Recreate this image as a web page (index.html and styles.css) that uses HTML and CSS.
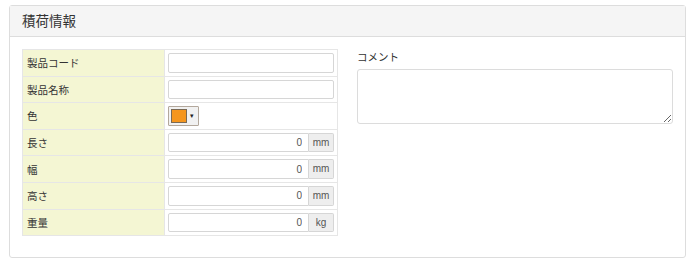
FILE: index.html
```html
<!DOCTYPE html>
<html lang="ja">
<head>
    <meta charset="UTF-8">
    <meta name="viewport" content="width=device-width, initial-scale=1.0">
    <title>積荷情報</title>
    <link rel="stylesheet" href="styles.css">
</head>
<body>
    <div class="panel">
        <div class="panel-heading">積荷情報</div>
        <div class="panel-body">
            <table class="spec-table">
                <tr>
                    <th>製品コード</th>
                    <td><input type="text" class="field"></td>
                </tr>
                <tr>
                    <th>製品名称</th>
                    <td><input type="text" class="field"></td>
                </tr>
                <tr>
                    <th>色</th>
                    <td>
                        <button type="button" class="color-btn">
                            <span class="swatch"></span>
                            <span class="caret">&#9662;</span>
                        </button>
                    </td>
                </tr>
                <tr>
                    <th>長さ</th>
                    <td>
                        <div class="input-group">
                            <input type="text" class="field num" value="0">
                            <span class="unit">mm</span>
                        </div>
                    </td>
                </tr>
                <tr>
                    <th>幅</th>
                    <td>
                        <div class="input-group">
                            <input type="text" class="field num" value="0">
                            <span class="unit">mm</span>
                        </div>
                    </td>
                </tr>
                <tr>
                    <th>高さ</th>
                    <td>
                        <div class="input-group">
                            <input type="text" class="field num" value="0">
                            <span class="unit">mm</span>
                        </div>
                    </td>
                </tr>
                <tr>
                    <th>重量</th>
                    <td>
                        <div class="input-group">
                            <input type="text" class="field num" value="0">
                            <span class="unit">kg</span>
                        </div>
                    </td>
                </tr>
            </table>

            <div class="comment">
                <label class="comment-label">コメント</label>
                <textarea class="comment-box"></textarea>
            </div>
        </div>
    </div>
</body>
</html>
```

FILE: styles.css
```css
:root {
    --border-color: #dddddd;
    --label-bg: #f4f6d3;
    --text-color: #333;
}

* {
    margin: 0;
    padding: 0;
    box-sizing: border-box;
}

body {
    font-family: 'Noto Sans CJK JP', 'Noto Sans', sans-serif;
    color: var(--text-color);
    background-color: #fff;
    padding: 5px 14px 0 9px;
}

.panel {
    border: 1px solid var(--border-color);
    border-radius: 3px;
    height: 253px;
}

.panel-heading {
    background-color: #f5f5f5;
    border-bottom: 1px solid var(--border-color);
    height: 31px;
    padding: 0 12px;
    font-size: 13.5px;
    line-height: 29px;
}

.panel-body {
    display: flex;
    gap: 19px;
    padding: 12px;
}

.spec-table {
    width: 317px;
    border-collapse: collapse;
    border: 1px solid #e6e6e6;
    font-size: 10.5px;
}

.spec-table th,
.spec-table td {
    border: 1px solid #e6e6e6;
    padding: 3px;
    height: 25.6px;
}

.spec-table th {
    width: 142px;
    background-color: var(--label-bg);
    font-weight: normal;
    text-align: left;
    padding-left: 4px;
}

.field {
    display: block;
    width: 100%;
    height: 19.6px;
    border: 1px solid #d6d6d6;
    border-radius: 2px;
    font-family: 'Liberation Sans', sans-serif;
    font-size: 10px;
    color: #555;
    padding: 0 6px;
    outline: none;
}

.field.num {
    text-align: right;
    border-radius: 2px 0 0 2px;
}

.input-group {
    display: flex;
}

.unit {
    flex: 0 0 25px;
    height: 19.6px;
    background-color: #eeeeee;
    border: 1px solid #d6d6d6;
    border-left: none;
    border-radius: 0 2px 2px 0;
    font-family: 'Liberation Sans', sans-serif;
    font-size: 10px;
    color: #555;
    text-align: center;
    line-height: 17.6px;
}

.color-btn {
    display: flex;
    align-items: center;
    width: 31px;
    height: 19.6px;
    padding: 0 2px;
    background-color: #f1f1f1;
    border: 1px solid #b3a89c;
    border-radius: 1px;
}

.swatch {
    width: 16px;
    height: 14px;
    background-color: #f5961e;
    border: 1px solid #7a6a55;
}

.caret {
    font-size: 7px;
    color: #222;
    margin-left: 3px;
}

.comment {
    width: 316px;
    padding-top: 1px;
}

.comment-label {
    display: block;
    font-size: 10.5px;
    line-height: 14px;
    margin-bottom: 5px;
}

.comment-box {
    display: block;
    width: 316px;
    height: 55px;
    border: 1px solid #dcdcdc;
    border-radius: 3px;
    resize: vertical;
}
```
